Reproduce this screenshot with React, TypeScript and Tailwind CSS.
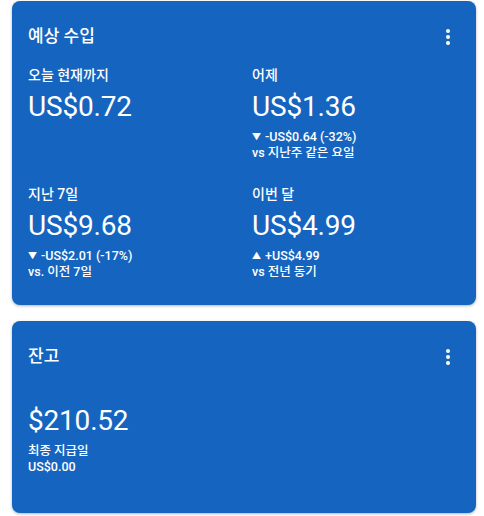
import React from "react";

const font = { fontFamily: 'Roboto, "Noto Sans CJK KR", sans-serif' };

function Dots() {
  return (
    <svg width="24" height="24" viewBox="0 0 24 24" fill="white">
      <circle cx="12" cy="6" r="2" />
      <circle cx="12" cy="12" r="2" />
      <circle cx="12" cy="18" r="2" />
    </svg>
  );
}

function Stat({ label, value, tri, change, vs }: { label: string; value: string; tri?: string; change?: string; vs?: string }) {
  return (
    <div className="flex flex-col">
      <div className="text-[14px] leading-[20px] font-medium">{label}</div>
      <div className="mt-[4px] text-[28px] leading-[36px] font-normal tracking-[-0.2px]">{value}</div>
      {change && (
        <>
          <div className="mt-[4px] text-[12.5px] leading-[16px] font-medium flex items-center">
            <span className="text-[9px] mr-[4px]">{tri}</span>
            <span>{change}</span>
          </div>
          <div className="text-[12.5px] leading-[16px] font-medium">{vs}</div>
        </>
      )}
    </div>
  );
}

export default function App() {
  return (
    <div className="bg-white w-[484px] h-[516px] pl-[12px] pr-[8px] pt-[1px] flex flex-col gap-[16px] text-white" style={font}>
      <div className="bg-[#1565c0] rounded-[8px] shadow-[0_1px_3px_rgba(0,0,0,0.3)] px-[16px] pt-[24px] pb-[26px] h-[304px]">
        <div className="flex items-center justify-between h-[24px]">
          <div className="text-[17px] font-medium">예상 수입</div>
          <Dots />
        </div>
        <div className="mt-[16px] grid grid-cols-2 gap-x-[16px] gap-y-[23px]">
          <Stat label="오늘 현재까지" value="US$0.72" />
          <Stat label="어제" value="US$1.36" tri="▼" change="-US$0.64 (-32%)" vs="vs 지난주 같은 요일" />
          <Stat label="지난 7일" value="US$9.68" tri="▼" change="-US$2.01 (-17%)" vs="vs. 이전 7일" />
          <Stat label="이번 달" value="US$4.99" tri="▲" change="+US$4.99" vs="vs 전년 동기" />
        </div>
      </div>
      <div className="bg-[#1565c0] rounded-[8px] shadow-[0_1px_3px_rgba(0,0,0,0.3)] px-[16px] pt-[24px] h-[192px]">
        <div className="flex items-center justify-between h-[24px]">
          <div className="text-[17px] font-medium">잔고</div>
          <Dots />
        </div>
        <div className="mt-[34px] text-[28px] leading-[36px] tracking-[-0.2px]">$210.52</div>
        <div className="mt-[4px] text-[12.5px] leading-[16px] font-medium">최종 지급일</div>
        <div className="text-[12.5px] leading-[16px] font-medium">US$0.00</div>
      </div>
    </div>
  );
}
